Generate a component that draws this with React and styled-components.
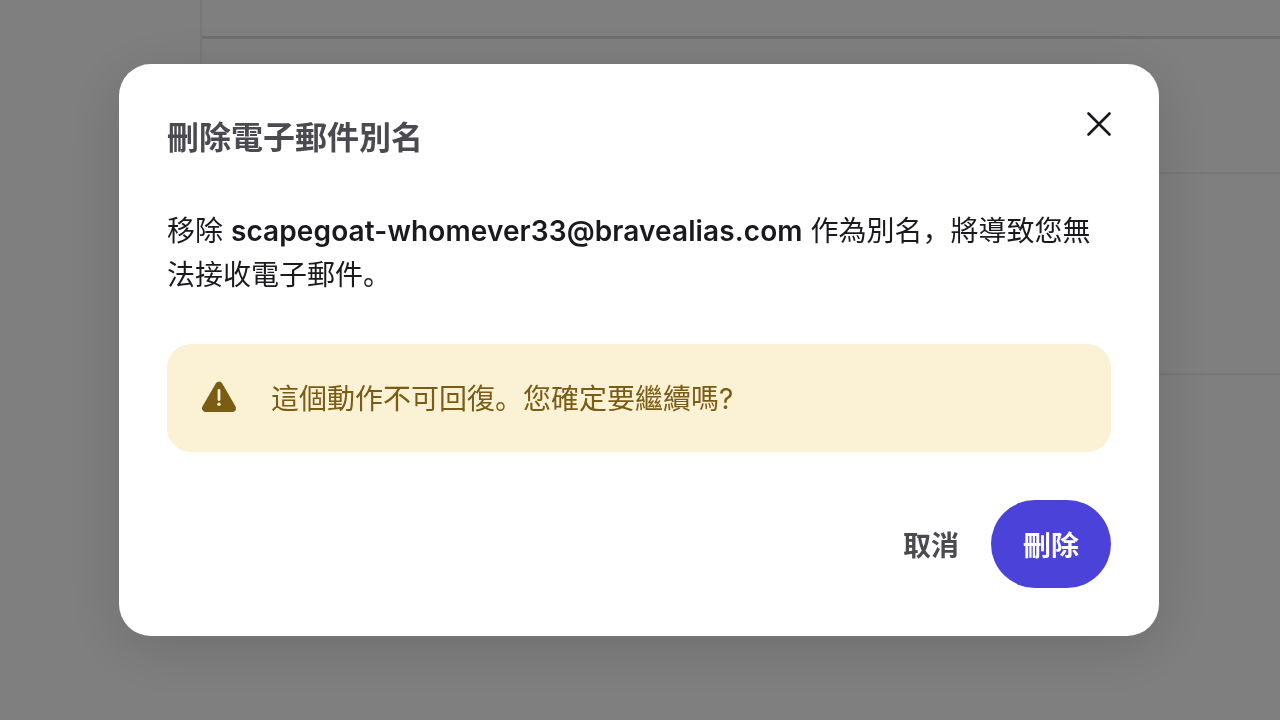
import React from "react";
import styled, { createGlobalStyle } from "styled-components";

const GlobalStyle = createGlobalStyle`
  html, body {
    margin: 0;
    height: 100%;
    background: #fff;
    font-family: Inter, "Noto Sans CJK SC", "Noto Sans CJK TC", sans-serif;
  }
`;

const Page = styled.div`
  display: flex;
  height: 720px;
  overflow: hidden;
`;

const Sidebar = styled.div`
  width: 200px;
  height: 400px;
  flex-shrink: 0;
  border-right: 2px solid #f1f1f5;
`;

const Main = styled.div`
  flex: 1;
  display: flex;
  flex-direction: column;
`;

const TopBar = styled.div`
  height: 36px;
  border-bottom: 3px solid #dcdcea;
`;

const Row = styled.div`
  height: ${(p) => p.$h}px;
  border-bottom: 2px solid #eeeef0;
`;

const Overlay = styled.div`
  position: fixed;
  inset: 0;
  padding: 0 2px 20px 0;
  background: rgba(0, 0, 0, 0.5);
  display: flex;
  align-items: center;
  justify-content: center;
`;

const Dialog = styled.div`
  width: 1040px;
  box-sizing: border-box;
  padding: 48px;
  background: #fff;
  border-radius: 32px;
  box-shadow: 0 12px 60px rgba(0, 0, 0, 0.14);
`;

const Header = styled.div`
  display: flex;
  justify-content: space-between;
  align-items: flex-start;
  height: 52px;
  margin-bottom: 45px;
`;

const Title = styled.h2`
  margin: 0;
  font-size: 32px;
  line-height: 52px;
  font-weight: 600;
  color: #4a4a50;
`;

const CloseButton = styled.button`
  width: 24px;
  height: 24px;
  padding: 0;
  border: 0;
  background: none;
  color: #1a1a1e;
  display: flex;
`;

const Message = styled.p`
  margin: 0 0 47px;
  font-size: 28px;
  line-height: 44px;
  color: #1a1a1e;

  strong {
    font-weight: 600;
    letter-spacing: 0.11px;
  }
`;

const Alert = styled.div`
  display: flex;
  align-items: center;
  gap: 35px;
  height: 108px;
  box-sizing: border-box;
  padding: 2px 35px 0;
  margin-bottom: 48px;
  border-radius: 24px;
  background: #fbf1d5;
  color: #7a5c14;
  font-size: 28px;
  line-height: 44px;
`;

const AlertIcon = styled.svg`
  flex-shrink: 0;
  margin-top: -6px;
`;

const Actions = styled.div`
  display: flex;
  justify-content: flex-end;
`;

const Button = styled.button`
  height: 88px;
  padding: 0 32px;
  border: 0;
  border-radius: 44px;
  font-family: inherit;
  font-size: 28px;
  font-weight: 600;
  background: ${(p) => (p.$primary ? "#4a42d9" : "transparent")};
  color: ${(p) => (p.$primary ? "#fff" : "#4a4a50")};
`;

export default function App() {
  return (
    <>
      <GlobalStyle />
      <Page>
        <Sidebar />
        <Main>
          <TopBar />
          <Row $h={133} />
          <Row $h={199} />
        </Main>
      </Page>
      <Overlay>
        <Dialog>
          <Header>
            <Title>刪除電子郵件別名</Title>
            <CloseButton aria-label="關閉">
              <svg width="24" height="24" viewBox="0 0 24 24" fill="none" stroke="currentColor" strokeWidth="2.6" strokeLinecap="round">
                <path d="M1.5 1.5l21 21M22.5 1.5l-21 21" />
              </svg>
            </CloseButton>
          </Header>
          <Message>
            移除 <strong>scapegoat-whomever33@bravealias.com</strong> 作為別名，將導致您無法接收電子郵件。
          </Message>
          <Alert>
            <AlertIcon width="34" height="31" viewBox="0 0 34 31">
              <path d="M17 4.5L3.8 27.2h26.4z" fill="currentColor" stroke="currentColor" strokeWidth="7.5" strokeLinejoin="round" />
              <path d="M17 9.5v9" stroke="#fbf1d5" strokeWidth="2.8" strokeLinecap="round" />
              <circle cx="17" cy="23.3" r="1.7" fill="#fbf1d5" />
            </AlertIcon>
            這個動作不可回復。您確定要繼續嗎?
          </Alert>
          <Actions>
            <Button>取消</Button>
            <Button $primary>刪除</Button>
          </Actions>
        </Dialog>
      </Overlay>
    </>
  );
}
